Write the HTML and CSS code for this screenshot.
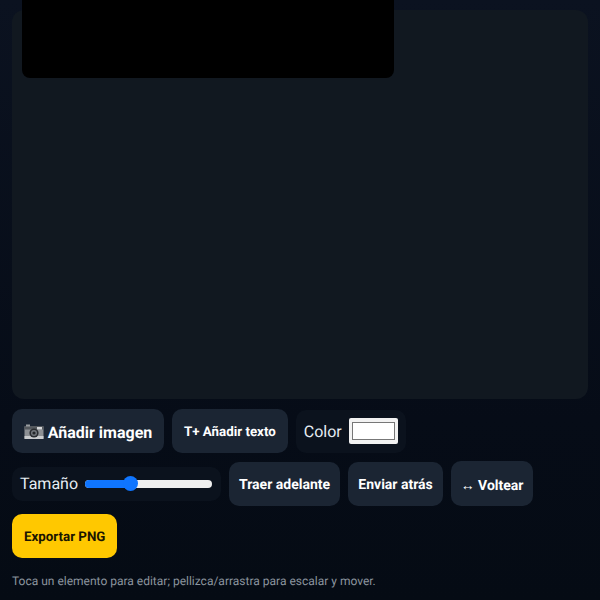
FILE: index.html
```html
<!DOCTYPE html>
<html lang="es">
<head>
<meta charset="utf-8">
<title>Editor</title>
<link rel="stylesheet" href="styles.css">
</head>
<body>
<main class="app">
  <section class="stage"><div class="canvas"></div></section>
  <div class="toolbar">
    <button class="btn btn-big"><svg class="cam" viewBox="0 0 20 18" width="20" height="18"><rect x="0.5" y="3" width="19" height="13" rx="1" fill="#8d9094"/><rect x="0.5" y="3" width="19" height="3.5" fill="#55595e"/><rect x="0.5" y="13" width="19" height="3" fill="#c9cbcd"/><rect x="2" y="1.5" width="4" height="2" fill="#9a9da0"/><rect x="13" y="4" width="5" height="2.5" fill="#d6d8da"/><circle cx="10" cy="10" r="4.6" fill="#2a2d31"/><circle cx="10" cy="10" r="3" fill="#73777c"/><circle cx="10" cy="10" r="1.6" fill="#24272a"/></svg> Añadir imagen</button>
    <button class="btn btn-small">T+ Añadir texto</button>
    <label class="field"><span>Color</span><span class="swatch"><span class="swatch-inner"></span></span></label>
    <label class="field field-size"><span>Tamaño</span><span class="range"><span class="range-fill"></span><span class="range-thumb"></span></span></label>
    <button class="btn btn-mid">Traer adelante</button>
    <button class="btn btn-mid btn-back">Enviar atrás</button>
    <button class="btn btn-flip">↔ Voltear</button>
    <button class="btn btn-small btn-export">Exportar PNG</button>
  </div>
  <p class="hint">Toca un elemento para editar; pellizca/arrastra para escalar y mover.</p>
</main>
</body>
</html>
```
FILE: styles.css
```css
* { box-sizing: border-box; }
html, body { margin: 0; height: 600px; overflow: hidden; }
body {
  background: linear-gradient(180deg, #0b1220 0%, #060c17 70%, #050b14 100%);
  font-family: Roboto, "Liberation Sans", sans-serif;
  color: #e6edf3;
  text-rendering: geometricPrecision;
}
.app { padding: 10px 12px 0; }
.stage {
  position: relative;
  height: 389px;
  background: #111820;
  border-radius: 12px;
}
.canvas {
  position: absolute;
  left: 10px;
  top: -30px;
  width: 372px;
  height: 98px;
  background: #000;
  border-radius: 8px;
}
.toolbar {
  display: flex;
  flex-wrap: wrap;
  gap: 8px;
  margin-top: 10px;
  align-items: center;
}
.btn {
  border: 0;
  border-radius: 10px;
  background: #1b2533;
  color: #fff;
  font: 700 14px Roboto, sans-serif;
  text-rendering: geometricPrecision;
  height: 44px;
  padding: 2px 12px 0;
  display: inline-flex;
  align-items: center;
  justify-content: center;
}
.btn-big { font-size: 16px; width: 152px; gap: 4px; padding: 2px 0 0; }
.btn-small { font-size: 13.33px; }
.btn-mid { padding: 2px 10px 0; }
.btn-back { width: 95px; padding: 2px 0 0; }
.btn-flip { width: 82px; height: 45px; padding: 3px 0 0; }
.btn-export { background: #ffc800; color: #1b1500; }
.cam { display: block; }
.field {
  display: flex;
  align-items: center;
  gap: 7px;
  height: 43px;
  padding: 0 8px;
  border-radius: 10px;
  background: #0b121d;
  font-size: 16px;
  color: #e6edf3;
}
.swatch {
  display: block;
  width: 49px;
  height: 26px;
  background: #f2f2f2;
  border-radius: 2px;
  padding: 4px 3px;
}
.swatch-inner {
  display: block;
  height: 100%;
  background: #fff;
  border: 1px solid #777;
}
.field-size { height: 34px; width: 209px; }
.range {
  position: relative;
  display: block;
  width: 127px;
  height: 8px;
  background: #efefef;
  border-radius: 4px;
}
.range-fill {
  display: block;
  width: 46px;
  height: 100%;
  background: #0f75ff;
  border-radius: 4px;
}
.range-thumb {
  position: absolute;
  left: 38px;
  top: -4px;
  width: 15px;
  height: 15px;
  border-radius: 50%;
  background: #0f75ff;
}
.hint {
  margin: 16px 0 0;
  font-size: 12px;
  color: #8b949e;
}
```
